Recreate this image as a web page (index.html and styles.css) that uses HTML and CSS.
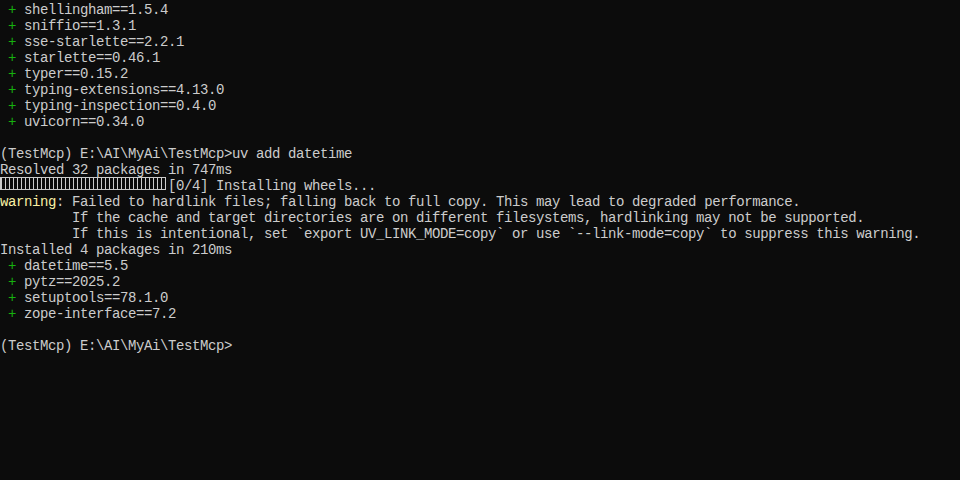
FILE: index.html
```html
<!DOCTYPE html>
<html>
<head>
<meta charset="utf-8">
<link rel="stylesheet" href="styles.css">
</head>
<body>
<pre class="term"> <span class="add">+</span> shellingham==1.5.4
 <span class="add">+</span> sniffio==1.3.1
 <span class="add">+</span> sse-starlette==2.2.1
 <span class="add">+</span> starlette==0.46.1
 <span class="add">+</span> typer==0.15.2
 <span class="add">+</span> typing-extensions==4.13.0
 <span class="add">+</span> typing-inspection==0.4.0
 <span class="add">+</span> uvicorn==0.34.0

(TestMcp) E:\AI\MyAi\TestMcp&gt;uv add datetime
Resolved 32 packages in 747ms
<span class="bar"></span>[0/4] Installing wheels...
<span class="warn">warning</span>: Failed to hardlink files; falling back to full copy. This may lead to degraded performance.
         If the cache and target directories are on different filesystems, hardlinking may not be supported.
         If this is intentional, set `export UV_LINK_MODE=copy` or use `--link-mode=copy` to suppress this warning.
Installed 4 packages in 210ms
 <span class="add">+</span> datetime==5.5
 <span class="add">+</span> pytz==2025.2
 <span class="add">+</span> setuptools==78.1.0
 <span class="add">+</span> zope-interface==7.2

(TestMcp) E:\AI\MyAi\TestMcp&gt;</pre>
</body>
</html>
```

FILE: styles.css
```css
html, body {
  margin: 0;
  padding: 0;
  background: #0c0c0c;
  height: 100%;
  overflow: hidden;
}
.term {
  margin: 0;
  padding: 2px 0 0 0;
  color: #cccccc;
  font-family: "Liberation Mono", "DejaVu Sans Mono", monospace;
  font-size: 14px;
  letter-spacing: -0.4px;
  line-height: 16px;
  white-space: pre;
}
.add {
  color: #16b10e;
}
.warn {
  color: #f9f1a5;
}
.bar {
  display: inline-block;
  box-sizing: border-box;
  width: 166px;
  height: 13px;
  margin: -1px 2px 0 0;
  vertical-align: top;
  border: 1px solid #cccccc;
  background: repeating-linear-gradient(to right, transparent 0, transparent 3px, #cccccc 3px, #cccccc 4px);
  background-position: 1px 0;
}
```
